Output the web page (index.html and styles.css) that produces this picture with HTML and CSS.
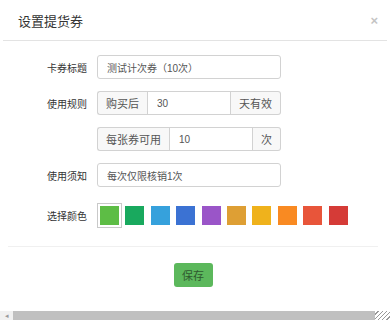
FILE: index.html
```html
<!DOCTYPE html>
<html lang="zh-CN">
<head>
    <meta charset="UTF-8">
    <meta name="viewport" content="width=device-width, initial-scale=1.0">
    <title>设置提货券</title>
    <link rel="stylesheet" href="styles.css">
</head>
<body>
    <div class="modal">
        <div class="modal-header">
            <h3>设置提货券</h3>
            <span class="close">×</span>
        </div>

        <div class="modal-body">
            <div class="form-row">
                <label>卡券标题</label>
                <div class="field">
                    <input class="input" type="text" value="测试计次券（10次）">
                </div>
            </div>

            <div class="form-row">
                <label>使用规则</label>
                <div class="field input-group">
                    <span class="addon">购买后</span>
                    <input class="input" type="text" value="30">
                    <span class="addon">天有效</span>
                </div>
            </div>

            <div class="form-row">
                <label></label>
                <div class="field input-group">
                    <span class="addon">每张券可用</span>
                    <input class="input" type="text" value="10">
                    <span class="addon">次</span>
                </div>
            </div>

            <div class="form-row">
                <label>使用须知</label>
                <div class="field">
                    <input class="input" type="text" value="每次仅限核销1次">
                </div>
            </div>

            <div class="form-row color-row">
                <label>选择颜色</label>
                <div class="swatches">
                    <span class="swatch selected" style="background:#5dbd45"></span>
                    <span class="swatch" style="background:#19a95e"></span>
                    <span class="swatch" style="background:#36a1dc"></span>
                    <span class="swatch" style="background:#3b72d3"></span>
                    <span class="swatch" style="background:#9a55c8"></span>
                    <span class="swatch" style="background:#de9f34"></span>
                    <span class="swatch" style="background:#efb21c"></span>
                    <span class="swatch" style="background:#f98a22"></span>
                    <span class="swatch" style="background:#e8553a"></span>
                    <span class="swatch" style="background:#d53b37"></span>
                </div>
            </div>
        </div>

        <div class="modal-footer">
            <button class="btn-save">保存</button>
        </div>

        <div class="scrollbar">
            <span class="scroll-arrow">◂</span>
            <span class="scroll-thumb"></span>
            <span class="scroll-grip"></span>
        </div>
    </div>
</body>
</html>
```

FILE: styles.css
```css
body {
    margin: 0;
    padding: 0;
    background-color: #fff;
    font-family: "Liberation Sans", "Noto Sans CJK SC", sans-serif;
    color: #333;
}

.modal {
    width: 390px;
    height: 322px;
    display: flex;
    flex-direction: column;
    overflow: hidden;
}

.modal-header {
    height: 41px;
    margin: 0 3px;
    border-bottom: 1px solid #e3e3e3;
    display: flex;
    align-items: center;
    justify-content: space-between;
    padding: 0 9px 0 15px;
    box-sizing: border-box;
}

.modal-header h3 {
    margin: 0;
    font-size: 13px;
    font-weight: normal;
    color: #333;
}

.close {
    font-size: 13px;
    font-weight: bold;
    color: #c4c4c4;
}

.modal-body {
    padding-top: 14px;
    display: flex;
    flex-direction: column;
    gap: 12px;
}

.form-row {
    display: flex;
    align-items: center;
    height: 24px;
}

.form-row label {
    width: 97px;
    padding-right: 10px;
    box-sizing: border-box;
    text-align: right;
    font-size: 10px;
    color: #333;
}

.field {
    width: 184px;
    height: 24px;
    display: flex;
}

.input {
    flex: 1;
    min-width: 0;
    height: 24px;
    box-sizing: border-box;
    border: 1px solid #d2d2d2;
    border-radius: 3px;
    padding: 0 9px;
    font-family: "Liberation Sans", "Noto Sans CJK SC", sans-serif;
    font-size: 10px;
    color: #555;
    outline: none;
}

.input-group .input {
    border-radius: 0;
}

.addon {
    display: flex;
    align-items: center;
    padding: 0 8px;
    height: 24px;
    box-sizing: border-box;
    border: 1px solid #d2d2d2;
    background-color: #f8f8f8;
    font-size: 11px;
    color: #555;
}

.addon:first-child {
    border-right: 0;
    border-radius: 3px 0 0 3px;
}

.addon:last-child {
    border-left: 0;
    border-radius: 0 3px 3px 0;
}

.color-row {
    margin-top: 4px;
}

.swatches {
    display: flex;
    gap: 6.4px;
    padding-left: 3px;
}

.swatch {
    width: 19px;
    height: 19px;
}

.swatch.selected {
    box-shadow: 0 0 0 2px #fff, 0 0 0 3px #c9c9c9;
}

.modal-footer {
    margin: 19px 12px 0 8px;
    border-top: 1px solid #f0f0f0;
    padding-top: 16px;
    display: flex;
    justify-content: center;
}

.btn-save {
    width: 39px;
    height: 24px;
    border: 0;
    border-radius: 3px;
    background-color: #5cb85c;
    color: #2f5a2f;
    font-family: "Liberation Sans", "Noto Sans CJK SC", sans-serif;
    font-size: 11px;
    padding: 0;
}

.scrollbar {
    margin-top: auto;
    margin-bottom: 2px;
    height: 9px;
    display: flex;
    align-items: center;
    background-color: #f1f1f1;
}

.scroll-arrow {
    width: 13px;
    font-size: 7px;
    color: #9a9a9a;
    text-align: center;
}

.scroll-thumb {
    width: 362px;
    height: 9px;
    background-color: #c0c0c0;
}

.scroll-grip {
    flex: 1;
    height: 9px;
    background: repeating-linear-gradient(135deg, #fff 0 2px, #999 2px 3px);
}
```
